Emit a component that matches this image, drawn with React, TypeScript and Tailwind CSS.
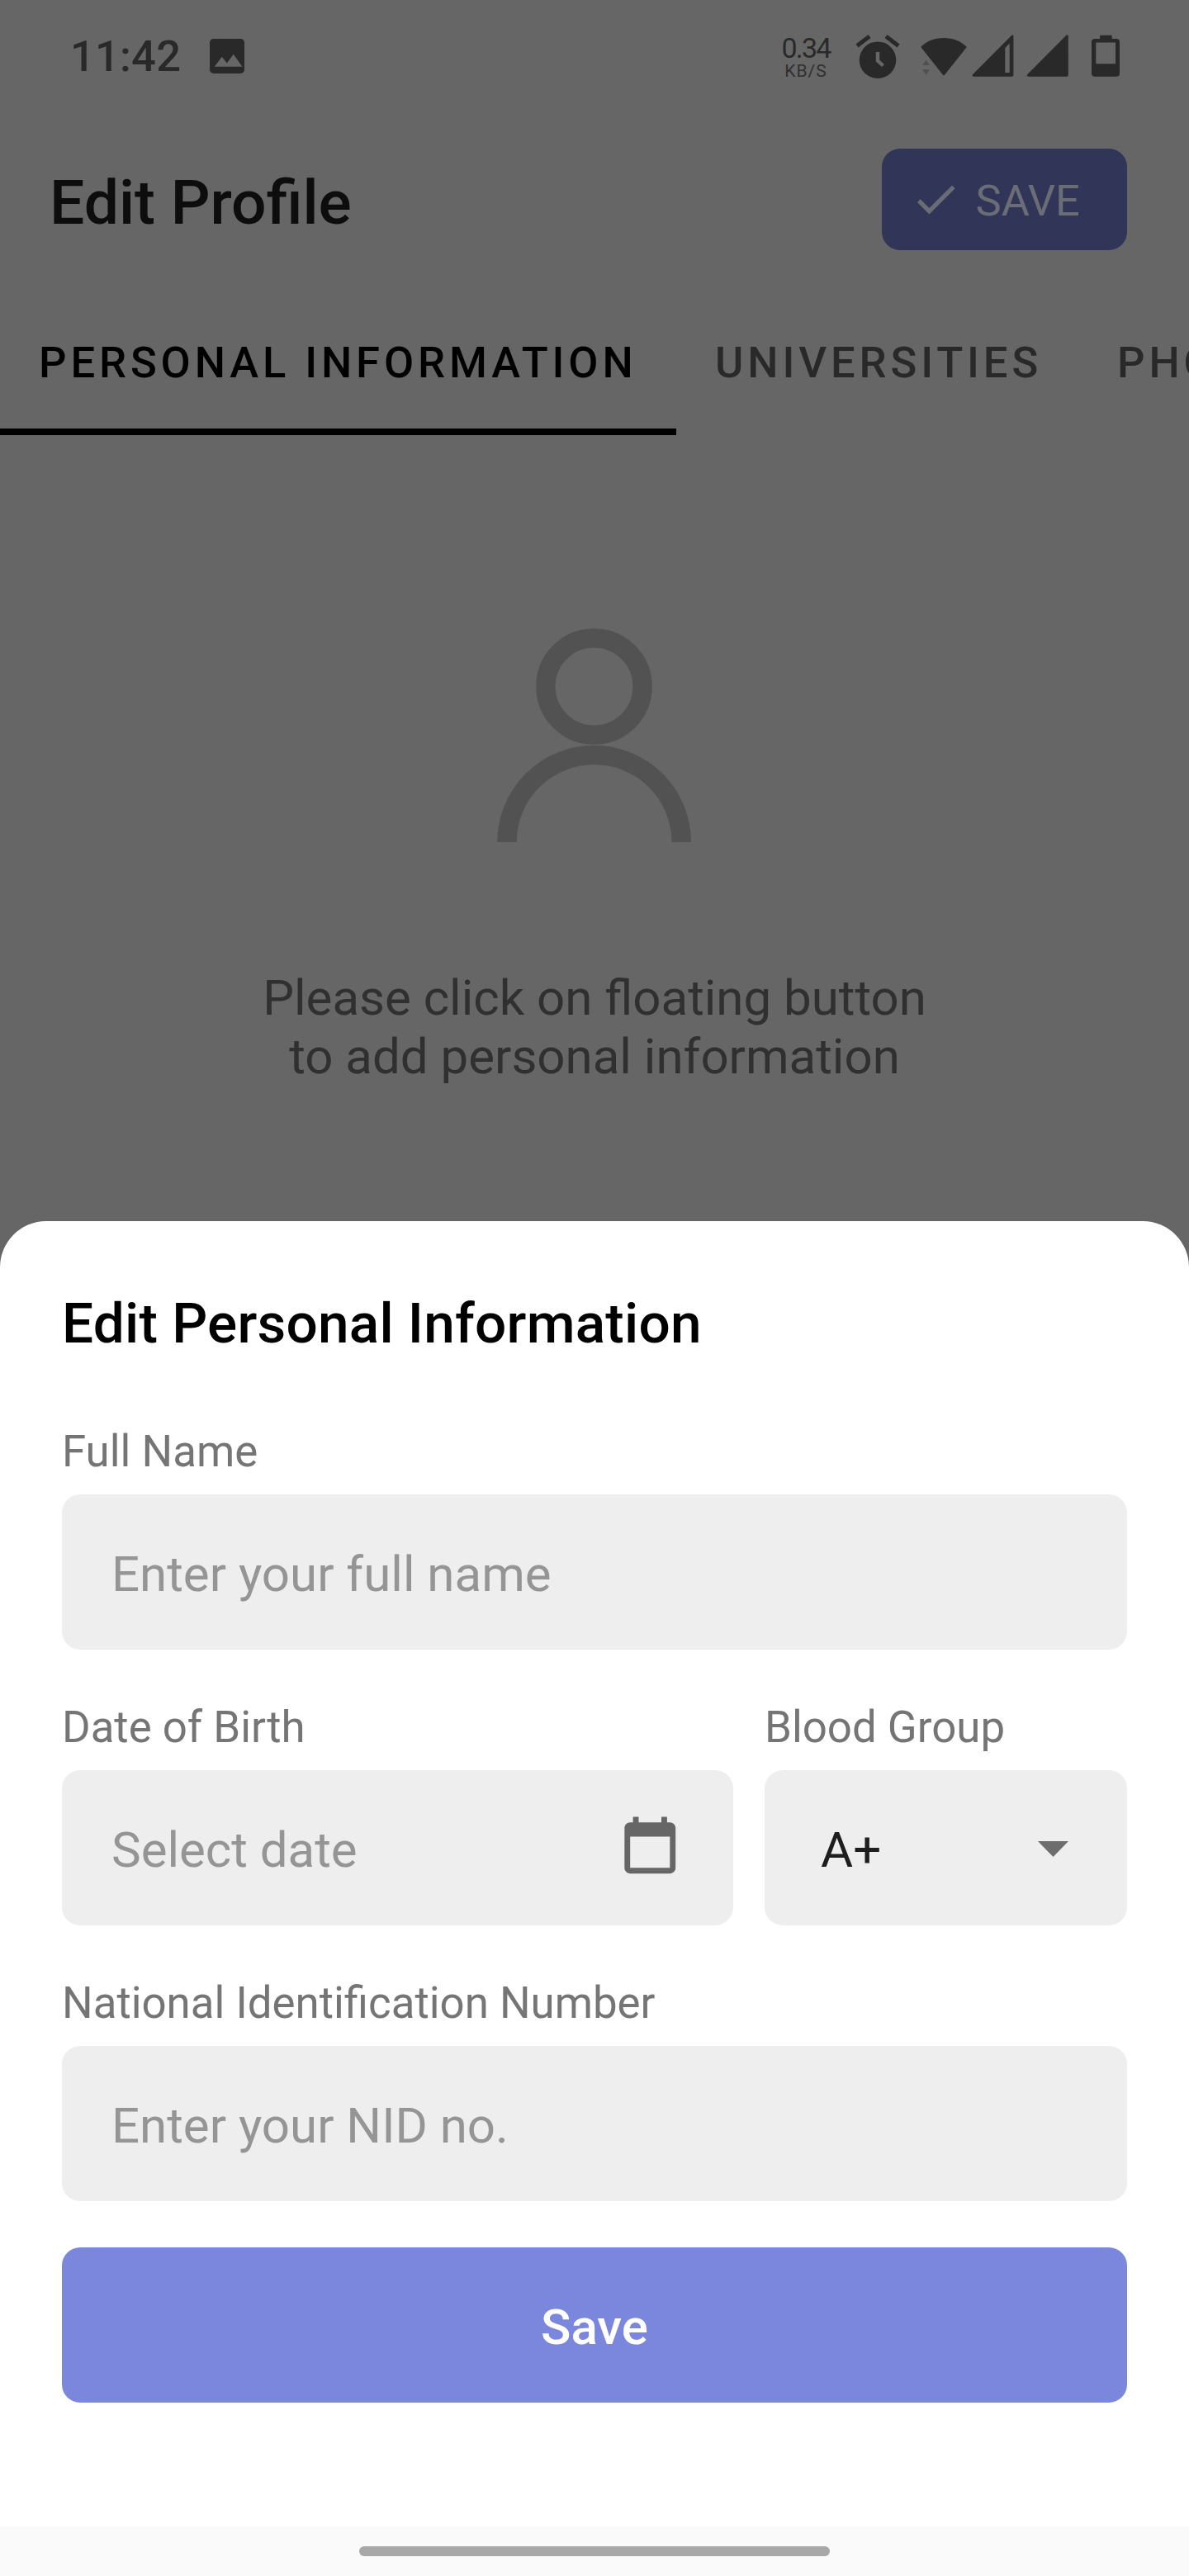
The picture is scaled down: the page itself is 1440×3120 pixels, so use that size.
import React from "react";

function StatusBar() {
  return (
    <div className="flex h-[136px] shrink-0 items-center pl-[85px] text-[#292929]">
      <span className="w-[162px] text-[52.5px] leading-[60px] font-medium tracking-[0.2px]">11:42</span>
      <svg className="size-[56px] shrink-0" viewBox="0 0 24 24" fill="currentColor">
        <path d="M21 19V5c0-1.1-.9-2-2-2H5c-1.1 0-2 .9-2 2v14c0 1.1.9 2 2 2h14c1.1 0 2-.9 2-2zM5.5 17.5l3.8-5.2 2.6 3.3 3.4-4.6 4.6 6.5z" />
      </svg>
      <div className="ml-[640px] flex w-[66px] flex-col items-center pt-1 whitespace-nowrap">
        <span className="text-[34px] leading-[32px] tracking-[-1.8px]">0.34</span>
        <span className="text-[21px] leading-[24px] tracking-[1px] text-[#303030]">KB/S</span>
      </div>
      <svg className="ml-[25px] h-[60px] w-[58px] shrink-0" viewBox="1034 38 58 60" fill="none">
        <circle cx="1063" cy="72.7" r="22.3" fill="#292929" />
        <path d="M1038 55.5L1053 44M1088 55.5L1073 44" stroke="#292929" strokeWidth="5" />
        <path d="M1063 63V73.5L1069.5 79.5" stroke="#666666" strokeWidth="4.4" />
      </svg>
      <svg className="ml-[20px] h-[60px] w-[62px] shrink-0" viewBox="1112 38 62 60" fill="#292929">
        <path d="M1115.2 57C1122 49.8 1132 46 1143 46S1164 49.8 1170.8 57L1144.2 90.4Q1143 92 1141.8 90.4z" />
        <path d="M1117 79L1121.5 72.7L1126 79zM1117 84L1121.5 90.7L1126 84z" fill="#505050" />
      </svg>
      <svg className="ml-[2px] h-[60px] w-[54px] shrink-0" viewBox="1176 38 54 60" fill="#292929" fillRule="evenodd">
        <path d="M1178.2 90L1225 43Q1227.4 41.2 1227.4 44.4V91Q1227.4 92.8 1225.6 92.8H1179.2Q1176.8 92.4 1178.2 90zM1217.3 58V88H1222.7V52.6z" />
      </svg>
      <svg className="ml-[12px] h-[60px] w-[54px] shrink-0" viewBox="1242 38 54 60" fill="#292929">
        <path d="M1244.4 90L1291.2 43Q1293.8 41.2 1293.8 44.4V91Q1293.8 92.8 1292 92.8H1245.4Q1243 92.4 1244.4 90z" />
      </svg>
      <svg className="ml-[24px] h-[60px] w-[38px] shrink-0" viewBox="1320 38 38 60" fill="#292929" fillRule="evenodd">
        <path d="M1332 47V44Q1332 42.7 1333.3 42.7H1345.4Q1346.7 42.7 1346.7 44V47H1352Q1356 47 1356 51V88.7Q1356 92.7 1352 92.7H1326Q1322 92.7 1322 88.7V51Q1322 47 1326 47zM1327.3 51.5V77.3H1351V51.5z" />
      </svg>
    </div>
  );
}

function Header() {
  return (
    <header className="mt-11 flex h-[122.5px] shrink-0 items-center justify-between pr-[75px] pl-[60px]">
      <h1 className="mt-[7px] text-[75px] leading-[88px] font-medium text-[#0d0d0d]">Edit Profile</h1>
      <button className="flex h-full w-[297px] items-center rounded-[22px] bg-[#313658] pl-[34px] text-[52.5px] leading-[60px] text-[#6a6c76]">
        <svg className="mr-[17px] size-[62.5px]" viewBox="0 0 24 24" fill="currentColor">
          <path d="M9 16.17L4.83 12l-1.42 1.41L9 19 21 7l-1.41-1.41z" />
        </svg>
        <span className="mt-[3px]">SAVE</span>
      </button>
    </header>
  );
}

function Tabs() {
  return (
    <nav className="mt-[44.5px] flex h-[180px] w-full shrink-0 overflow-hidden text-[52.5px] leading-[60px] font-medium tracking-[4.9px] whitespace-nowrap text-[#292929]">
      <div className="w-[819px] shrink-0 border-b-8 border-black pt-[62px] pl-[47px] text-black">
        PERSONAL INFORMATION
      </div>
      <div className="w-[487px] shrink-0 pt-[62px] pl-[47px]">UNIVERSITIES</div>
      <div className="shrink-0 pt-[62px] pl-[47px]">PHOTO</div>
    </nav>
  );
}

function EmptyState() {
  return (
    <div className="flex flex-col items-center pt-[234px]">
      <svg className="h-[259px] w-[236px]" viewBox="0 0 236 259" fill="none" stroke="#525252" strokeWidth="23.4">
        <circle cx="117.5" cy="70.5" r="58.6" />
        <path d="M12 259A105.6 105.6 0 0 1 223.2 259" />
      </svg>
      <p className="mt-[153px] text-center text-[60px] leading-[71px] text-[#303030]">
        Please click on floating button
        <br />
        to add personal information
      </p>
    </div>
  );
}

function Field({ label, className, children }: { label: string; className?: string; children: React.ReactNode }) {
  return (
    <div className={className}>
      <div className="text-[52.8px] leading-[62px] whitespace-nowrap text-[#757575]">{label}</div>
      <div className="mt-[21px] flex h-[188px] items-center rounded-[22px] bg-[#eeeeee] pl-[60px] text-[60px] leading-[70px] text-[#959595]">
        {children}
      </div>
    </div>
  );
}

function Sheet() {
  return (
    <section className="flex h-[1581px] shrink-0 flex-col rounded-t-[56px] bg-white px-[75px] pt-[84px]">
      <h2 className="text-[67.5px] leading-[80px] font-medium tracking-[0.23px] text-black">Edit Personal Information</h2>
      <div className="mt-[84px] flex flex-col gap-[63px]">
        <Field label="Full Name">
          <span className="mt-[5px]">Enter your full name</span>
        </Field>
        <div className="flex justify-between">
          <Field label="Date of Birth" className="w-[813px]">
            <span className="mt-[5px]">Select date</span>
            <svg className="mr-[60px] ml-auto size-[82.5px]" viewBox="0 0 24 24" fill="#666666">
              <path d="M19 3h-1V1h-2v2H8V1H6v2H5c-1.11 0-1.99.9-1.99 2L3 19c0 1.1.89 2 2 2h14c1.1 0 2-.9 2-2V5c0-1.1-.9-2-2-2zm0 16H5V8h14v11z" />
            </svg>
          </Field>
          <Field label="Blood Group" className="w-[439px]">
            <span className="mt-[5px] ml-[8px] text-[#1e1e1e]">A+</span>
            <svg className="mt-[3px] mr-[71px] ml-auto h-[19px] w-[37px]" viewBox="0 0 37 19" fill="#6d6d6d">
              <path d="M0 0H37L18.5 19z" />
            </svg>
          </Field>
        </div>
        <Field label="National Identification Number">
          <span className="mt-[5px]">Enter your NID no.</span>
        </Field>
      </div>
      <button className="mt-14 h-[188px] rounded-[22px] bg-[#7b87dc] pt-[5px] text-[60px] leading-[70px] font-medium text-white">
        Save
      </button>
    </section>
  );
}

export default function App() {
  return (
    <main className="flex h-[3120px] w-[1440px] flex-col overflow-hidden bg-[#666666] font-['Roboto',sans-serif]">
      <div className="flex h-[1479px] shrink-0 flex-col">
        <StatusBar />
        <Header />
        <Tabs />
        <EmptyState />
      </div>
      <Sheet />
      <div className="flex flex-1 justify-center bg-[#fafafa] pt-6">
        <div className="h-3 w-[570px] rounded-full bg-[#a8a8a8]" />
      </div>
    </main>
  );
}
